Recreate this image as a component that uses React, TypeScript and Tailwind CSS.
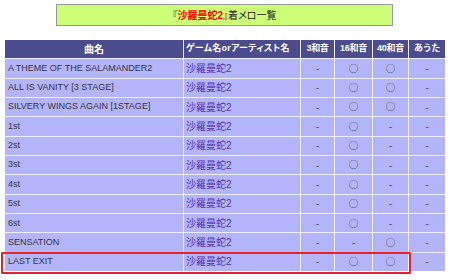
import React from "react";

type Row = { title: string; marks: [string, string, string, string] };

const rows: Row[] = [
  { title: "A THEME OF THE SALAMANDER2", marks: ["-", "○", "○", "-"] },
  { title: "ALL IS VANITY [3 STAGE]", marks: ["-", "○", "○", "-"] },
  { title: "SILVERY WINGS AGAIN [1STAGE]", marks: ["-", "○", "○", "-"] },
  { title: "1st", marks: ["-", "○", "-", "-"] },
  { title: "2st", marks: ["-", "○", "-", "-"] },
  { title: "3st", marks: ["-", "○", "-", "-"] },
  { title: "4st", marks: ["-", "○", "-", "-"] },
  { title: "5st", marks: ["-", "○", "-", "-"] },
  { title: "6st", marks: ["-", "○", "-", "-"] },
  { title: "SENSATION", marks: ["-", "-", "○", "-"] },
  { title: "LAST EXIT", marks: ["-", "○", "○", "-"] },
];

const FONT = { fontFamily: '"Liberation Sans", "Noto Sans CJK JP", sans-serif' };
const CJK = { fontFamily: '"Noto Sans CJK JP", sans-serif' };

const gridCols = "grid grid-cols-[178px_116px_33px_37px_35px_36px] gap-x-[1px]";

function Mark({ v }: { v: string }) {
  const circle = v === "○";
  return (
    <div
      className={`flex h-[18.35px] items-center justify-center bg-[#b4b4fa] leading-none ${
        circle ? "text-[9.5px] text-[#3e3e55]" : "text-[11px] text-[#5a5a6a]"
      }`}
      style={circle ? CJK : undefined}
    >
      {v}
    </div>
  );
}

export default function App() {
  return (
    <div className="h-[280px] w-[450px] bg-white" style={FONT}>
      <div className="pt-[4px]">
        <div className="ml-[56px] flex h-[22px] w-[337px] items-center justify-center whitespace-nowrap border border-[#9a9a9a] bg-[#ccff77] text-[10px] text-[#222] [font-feature-settings:'palt']">
          <span>『</span>
          <span className="font-bold text-[#ff0000]">沙羅曼蛇2</span>
          <span>』着メロ一覧</span>
        </div>
      </div>

      <div className="ml-[5px] mt-[14px] flex w-[440px] flex-col gap-y-[1px] bg-[#eeeeff]">
        <div className={gridCols}>
          <div className="flex h-[18.35px] items-center justify-center bg-[#4b4b8d] text-[10px] font-bold text-white">
            曲名
          </div>
          <div className="flex h-[18.35px] items-center whitespace-nowrap bg-[#4b4b8d] pl-[2px] text-[9px] font-bold tracking-[0.3px] text-white [font-feature-settings:'palt']">
            ゲーム名orアーティスト名
          </div>
          {["3和音", "16和音", "40和音", "あうた"].map((h) => (
            <div
              key={h}
              className="flex h-[18.35px] items-center justify-center whitespace-nowrap bg-[#4b4b8d] text-[9px] font-bold tracking-[-0.3px] text-white"
            >
              {h}
            </div>
          ))}
        </div>

        {rows.map((r, i) => (
          <div key={r.title} className={`relative ${gridCols}`}>
            <div className="flex h-[18.35px] items-center bg-[#b4b4fa] pl-[3px] text-[9px] text-[#333344]">
              {r.title}
            </div>
            <div className="flex h-[18.35px] items-center bg-[#b4b4fa] pl-[2px] text-[10px] text-[#5530b8]">
              沙羅曼蛇2
            </div>
            {r.marks.map((m, j) => (
              <Mark key={j} v={m} />
            ))}
            {i === rows.length - 1 && (
              <div className="pointer-events-none absolute left-[-4px] top-[-1px] h-[22px] w-[410px] rounded-[1px] border-2 border-[#e3262b]" />
            )}
          </div>
        ))}
      </div>
    </div>
  );
}
